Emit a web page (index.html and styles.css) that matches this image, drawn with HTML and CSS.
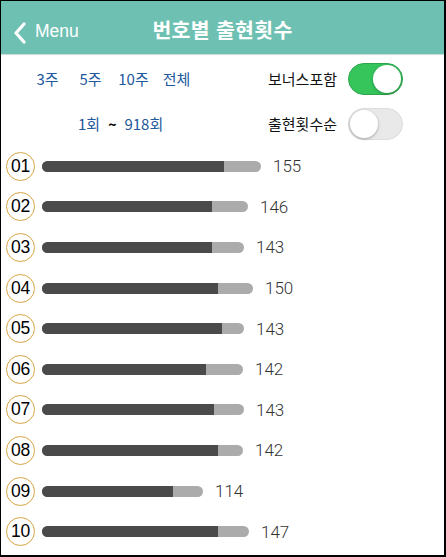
FILE: index.html
```html
<!DOCTYPE html>
<html lang="ko">
<head>
<meta charset="utf-8">
<title>번호별 출현횟수</title>
<link rel="stylesheet" href="styles.css">
</head>
<body>
<div class="frame">
  <header class="nav">
    <div class="back">
      <svg class="chev" width="14" height="22" viewBox="0 0 14 22"><polyline points="11,2 3,11 11,20" fill="none" stroke="#fff" stroke-width="3.2" stroke-linecap="round" stroke-linejoin="round"/></svg>
      <span class="back-label">Menu</span>
    </div>
    <h1 class="title">번호별 출현횟수</h1>
    <div></div>
  </header>

  <section class="controls">
    <div class="ctrl-row">
      <div class="tabs">
        <span class="tab">3주</span>
        <span class="tab">5주</span>
        <span class="tab">10주</span>
        <span class="tab">전체</span>
      </div>
      <div class="opt">
        <span class="opt-label">보너스포함</span>
        <span class="switch on"><span class="knob"></span></span>
      </div>
    </div>
    <div class="ctrl-row">
      <div class="range">
        <span class="blue">1회</span>
        <span class="tilde">~</span>
        <span class="blue">918회</span>
      </div>
      <div class="opt">
        <span class="opt-label">출현횟수순</span>
        <span class="switch"><span class="knob"></span></span>
      </div>
    </div>
  </section>

  <ul class="list">
    <li class="row"><span class="ball">01</span><span class="bar" style="width:219px"><span class="fill" style="width:182px"></span></span><span class="count">155</span></li>
    <li class="row"><span class="ball">02</span><span class="bar" style="width:206px"><span class="fill" style="width:170px"></span></span><span class="count">146</span></li>
    <li class="row"><span class="ball">03</span><span class="bar" style="width:202px"><span class="fill" style="width:170px"></span></span><span class="count">143</span></li>
    <li class="row"><span class="ball">04</span><span class="bar" style="width:211px"><span class="fill" style="width:176px"></span></span><span class="count">150</span></li>
    <li class="row"><span class="ball">05</span><span class="bar" style="width:202px"><span class="fill" style="width:180px"></span></span><span class="count">143</span></li>
    <li class="row"><span class="ball">06</span><span class="bar" style="width:201px"><span class="fill" style="width:164px"></span></span><span class="count">142</span></li>
    <li class="row"><span class="ball">07</span><span class="bar" style="width:202px"><span class="fill" style="width:172px"></span></span><span class="count">143</span></li>
    <li class="row"><span class="ball">08</span><span class="bar" style="width:201px"><span class="fill" style="width:176px"></span></span><span class="count">142</span></li>
    <li class="row"><span class="ball">09</span><span class="bar" style="width:161px"><span class="fill" style="width:131px"></span></span><span class="count">114</span></li>
    <li class="row"><span class="ball">10</span><span class="bar" style="width:207px"><span class="fill" style="width:176px"></span></span><span class="count">147</span></li>
  </ul>
</div>
</body>
</html>
```
FILE: styles.css
```css
* { box-sizing: border-box; }
html, body { margin: 0; padding: 0; background: #fff; }
body { font-family: "Noto Sans CJK KR", "Noto Sans", sans-serif; }

.frame {
  width: 446px;
  height: 557px;
  border-style: solid;
  border-color: #000;
  border-width: 1px 2px 2px 1px;
  overflow: hidden;
  background: #fff;
}

.nav {
  height: 54px;
  background: #6ec1b2;
  border-bottom: 1px solid #cfdcd9;
  display: grid;
  grid-template-columns: 1fr auto 1fr;
  align-items: center;
  padding-top: 9px;
}
.back {
  display: flex;
  align-items: center;
  padding-left: 12px;
  color: #fff;
}
.chev { display: block; margin-top: 1px; }
.back-label {
  font-family: "Liberation Sans", Arial, sans-serif;
  font-size: 17.5px;
  margin-left: 8px;
  line-height: 1;
}
.title {
  margin: 0;
  font-size: 20.5px;
  font-weight: 700;
  color: #fff;
  line-height: 1;
  margin-top: -5px;
  letter-spacing: 0.3px;
}

.controls { padding-top: 1px; }
.ctrl-row {
  height: 45px;
  display: flex;
  align-items: center;
  justify-content: space-between;
  padding-right: 41px;
}
.tabs {
  display: flex;
  padding-left: 25px;
}
.tab {
  width: 43px;
  text-align: center;
  font-size: 15px;
  color: #22589c;
}
.range {
  display: flex;
  align-items: center;
  padding-left: 77px;
  font-size: 15px;
  gap: 8px;
}
.blue { color: #22589c; }
.tilde { color: #000; font-size: 14px; font-weight: 700; }
.opt {
  display: flex;
  align-items: center;
  gap: 11px;
}
.opt-label { font-size: 15px; color: #111; }

.switch {
  position: relative;
  width: 55px;
  height: 32px;
  border-radius: 16px;
  background: #e9e9ea;
  border: 1px solid #dcdcdc;
  display: block;
}
.switch.on {
  background: #35c55b;
  border-color: #2ea54d;
}
.knob {
  position: absolute;
  top: 1px;
  left: 1px;
  width: 28px;
  height: 28px;
  border-radius: 50%;
  background: #fff;
  box-shadow: 0 1px 3px rgba(0,0,0,0.3);
}
.switch.on .knob { left: 24px; }

.list {
  list-style: none;
  margin: 0;
  padding: 0 0 0 5px;
}
.row {
  height: 40.6px;
  display: flex;
  align-items: center;
}
.ball {
  width: 29px;
  height: 29px;
  border-radius: 50%;
  border: 1.5px solid #d6a545;
  display: flex;
  align-items: center;
  justify-content: center;
  font-family: "Liberation Sans", Arial, sans-serif;
  font-size: 17.5px;
  color: #000;
  letter-spacing: -0.3px;
  flex: none;
}
.bar {
  margin-left: 7px;
  height: 11px;
  border-radius: 5.5px;
  background: #ababab;
  display: block;
  overflow: hidden;
  flex: none;
}
.fill {
  display: block;
  height: 100%;
  background: #4a4a4a;
}
.count {
  margin-left: 12px;
  font-family: Roboto, "Liberation Sans", sans-serif;
  font-weight: 300;
  font-size: 17px;
  color: #333;
}
```
